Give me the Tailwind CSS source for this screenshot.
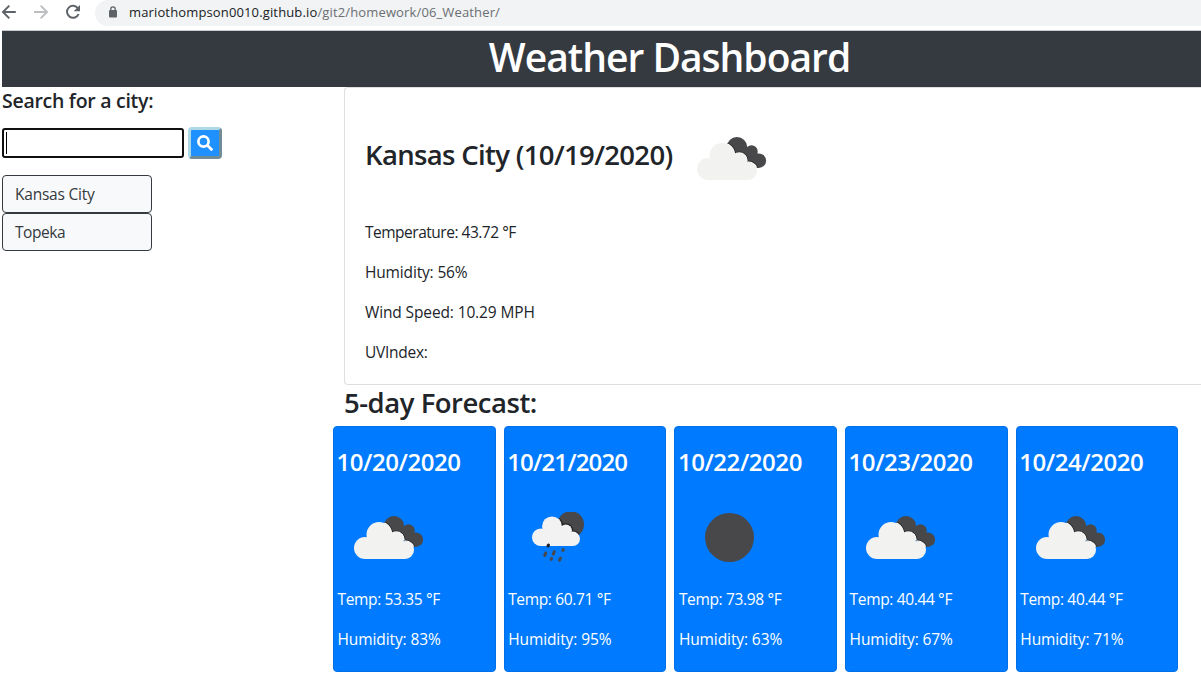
<!DOCTYPE html>
<html lang="en">
<head>
<meta charset="utf-8">
<title>Weather Dashboard</title>
<script src="https://cdn.jsdelivr.net/npm/@tailwindcss/browser@4"></script>
</head>
<body class="h-[688px] w-[1201px] overflow-hidden bg-white font-['Open_Sans','Noto_Sans',sans-serif] text-[15.5px] leading-6 text-[#212529]">
<svg class="absolute size-0">
  <defs>
    <g id="front">
      <circle cx="25" cy="18.5" r="12.5"/><circle cx="11" cy="32" r="11"/><circle cx="42.3" cy="23.6" r="7.6"/><circle cx="51" cy="34" r="9"/><path d="M11 25h14l15-3 11 6v15H11z"/>
    </g>
    <clipPath id="backClip"><circle cx="40" cy="10.3" r="10.3"/><circle cx="54.5" cy="14.5" r="6.2"/><circle cx="61.8" cy="23.7" r="7.3"/><path d="M38 8l12 3 12 10-3 8-22-12z"/></clipPath>
    <clipPath id="moonClip"><circle cx="48.5" cy="16" r="16.5"/></clipPath>
    <symbol id="clouds" viewBox="0 0 70 43">
      <g clip-path="url(#backClip)"><path fill="#48484a" d="M0-1h70v44H0z"/><use href="#front" fill="#222" stroke="#222" stroke-width="3"/><use href="#front" fill="#fafafa" stroke="#fafafa" stroke-width="1.6"/></g>
      <use href="#front" fill="#f2f2f0"/>
    </symbol>
  </defs>
</svg>

<nav class="flex h-[30px] items-start">
  <svg class="h-6 w-[95px] shrink-0" viewBox="0 0 95 24" fill="none" stroke-width="2">
    <path stroke="#5f6368" d="M15.8 12H3.5M9.3 5.6 3 12l6.3 6.4"/>
    <path stroke="#bdbfc1" d="M34 12h12.5M40.7 5.6 47 12l-6.3 6.4"/>
    <path stroke="#5f6368" d="M78 8.5a6 6 0 1 0 .6 5.5"/><path fill="#5f6368" d="M80 5v6.3h-6.3z"/>
  </svg>
  <div class="flex h-[26px] grow items-center rounded-bl-[13px] rounded-tl-[13px] bg-[#f1f3f4] pb-[2px] pl-[13px]">
    <svg class="h-3 w-[10px]" viewBox="0 0 10 12"><rect x="1" y="4" width="8" height="7.5" rx="1" fill="#5f6368"/><path d="M2.8 5V3a2.2 2.2 0 0 1 4.4 0v2" fill="none" stroke="#5f6368" stroke-width="1.3"/></svg>
    <span class="ml-[11px] whitespace-nowrap text-[13px] tracking-[0.14px] text-[#202124]">mariothompson0010.github.io<span class="text-[#6b6f73]">/git2/homework/06_Weather/</span></span>
  </div>
</nav>
<header class="ml-[2px] flex h-[57px] justify-center border-t border-[#c9cbcd] bg-[#343a40] pl-[136px]">
  <h1 class="text-[39px] font-semibold leading-[52px] tracking-[-1px] text-white">Weather Dashboard</h1>
</header>

<div class="flex">
  <aside class="w-[333px] shrink-0 pl-[2px]">
    <h2 class="mt-px text-[19.5px] font-semibold leading-[25px] tracking-[-0.28px]">Search for a city:</h2>
    <div class="mt-[14px] flex gap-1">
      <div class="mt-px flex h-[30px] w-[182px] items-center rounded-[3px] border-2 border-[#101010] bg-white pl-[2px]"><div class="h-[22px] w-px bg-black"></div></div>
      <button class="flex h-8 w-[34px] items-center justify-center rounded-[4px] border-[3px] border-b-[#6f8c98] border-l-[#add8e6] border-r-[#6f8c98] border-t-[#add8e6] bg-[#1e90ff]">
        <svg class="h-4 w-4" viewBox="0 0 16 16" fill="none" stroke="#fff" stroke-width="2.7"><circle cx="6.5" cy="6.5" r="5.1"/><path d="m10.3 10.3 5 5"/></svg>
      </button>
    </div>
    <div class="mt-4 flex w-[150px] flex-col text-[#343a40]">
      <div class="h-[38px] rounded-[4px] border border-[#343a40] bg-[#f8f9fa] px-3 py-[6px]"><span class="tracking-[-0.22px]">Kansas City</span></div>
      <div class="h-[38px] rounded-[4px] border border-[#343a40] bg-[#f8f9fa] px-3 py-[6px]"><span class="tracking-[-0.45px]">Topeka</span></div>
    </div>
  </aside>

  <main class="w-[868px] shrink-0">
    <section class="ml-[11px] h-[298px] rounded-l-[4px] border border-r-0 border-[#dfdfdf] pl-5 pt-[49px]">
      <div class="flex h-[43px] items-start">
        <h3 class="w-[332px] whitespace-nowrap text-[27.5px] font-semibold leading-9 tracking-[-0.66px]">Kansas City (10/19/2020)</h3>
        <svg class="h-[43px] w-[70px]"><use href="#clouds"/></svg>
      </div>
      <div class="mt-10 flex flex-col gap-4">
        <p><span class="tracking-[-0.49px]">Temperature: 43.72 °F</span></p>
        <p><span class="tracking-[-0.16px]">Humidity: 56%</span></p>
        <p><span class="tracking-[-0.13px]">Wind Speed: 10.29 MPH</span></p>
        <p><span class="tracking-[-0.28px]">UVIndex:</span></p>
      </div>
    </section>
    <h3 class="ml-[11px] h-[41px] text-[27.5px] font-semibold leading-9 tracking-[-0.48px]">5-day Forecast:</h3>
    <div class="grid w-[845.5px] grid-cols-5 gap-2 text-white">
      <article class="h-[246px] rounded-[4px] border border-[#0070e8] bg-[#007bff] pl-[3.5px] pt-[19px]">
        <h4 class="-ml-px text-2xl font-semibold leading-[32px] tracking-[-0.45px]">10/20/2020</h4>
        <div class="ml-4 mt-[38px] h-[49px]"><svg class="h-[43px] w-[70px]"><use href="#clouds"/></svg></div>
        <p class="mt-[22px]"><span class="tracking-[-0.35px]">Temp: 53.35 °F</span></p>
        <p class="mt-4"><span class="tracking-[-0.1px]">Humidity: 83%</span></p>
      </article>
      <article class="h-[246px] rounded-[4px] border border-[#0070e8] bg-[#007bff] pl-[3.5px] pt-[19px]">
        <h4 class="-ml-px text-2xl font-semibold leading-[32px] tracking-[-0.85px]">10/21/2020</h4>
        <div class="ml-6 mt-[34px] h-[53px]"><svg class="h-[53px] w-[54px]" viewBox="0 0 54 53">
          <g transform="translate(0 -.4) scale(.8)">
            <g clip-path="url(#moonClip)"><path fill="#48484a" d="M0-1h70v44H0z"/><use href="#front" fill="#222" stroke="#222" stroke-width="3"/></g>
            <use href="#front" fill="#f2f2f2"/>
          </g>
          <g stroke="#48484a" stroke-width="3" stroke-linecap="round"><path stroke="#222" d="m16.5 33-.5 1"/><path d="m13.7 41-1 2.4M22.3 39.7l-1 2.4M31.3 37.6l-.4.8M19.6 46.6l-.4.8M28.5 46.2l-1 2"/></g>
        </svg></div>
        <p class="mt-[22px]"><span class="tracking-[-0.35px]">Temp: 60.71 °F</span></p>
        <p class="mt-4"><span class="tracking-[-0.1px]">Humidity: 95%</span></p>
      </article>
      <article class="h-[246px] rounded-[4px] border border-[#0070e8] bg-[#007bff] pl-[3.5px] pt-[19px]">
        <h4 class="-ml-px text-2xl font-semibold leading-[32px] tracking-[-0.45px]">10/22/2020</h4>
        <div class="ml-[26px] mt-[35px] h-[52px]"><div class="size-[49px] rounded-full bg-[#48484a]"></div></div>
        <p class="mt-[22px]"><span class="tracking-[-0.35px]">Temp: 73.98 °F</span></p>
        <p class="mt-4"><span class="tracking-[-0.1px]">Humidity: 63%</span></p>
      </article>
      <article class="h-[246px] rounded-[4px] border border-[#0070e8] bg-[#007bff] pl-[3.5px] pt-[19px]">
        <h4 class="-ml-px text-2xl font-semibold leading-[32px] tracking-[-0.45px]">10/23/2020</h4>
        <div class="ml-4 mt-[38px] h-[49px]"><svg class="h-[43px] w-[70px]"><use href="#clouds"/></svg></div>
        <p class="mt-[22px]"><span class="tracking-[-0.35px]">Temp: 40.44 °F</span></p>
        <p class="mt-4"><span class="tracking-[-0.1px]">Humidity: 67%</span></p>
      </article>
      <article class="h-[246px] rounded-[4px] border border-[#0070e8] bg-[#007bff] pl-[3.5px] pt-[19px]">
        <h4 class="-ml-px text-2xl font-semibold leading-[32px] tracking-[-0.45px]">10/24/2020</h4>
        <div class="ml-4 mt-[38px] h-[49px]"><svg class="h-[43px] w-[70px]"><use href="#clouds"/></svg></div>
        <p class="mt-[22px]"><span class="tracking-[-0.35px]">Temp: 40.44 °F</span></p>
        <p class="mt-4"><span class="tracking-[-0.1px]">Humidity: 71%</span></p>
      </article>
    </div>
  </main>
</div>
</body>
</html>
